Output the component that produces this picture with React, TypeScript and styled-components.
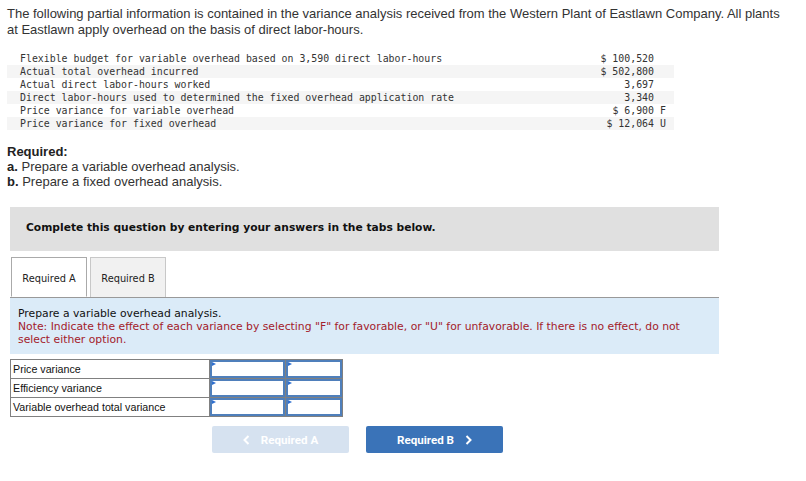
import React from 'react'
import styled, { createGlobalStyle } from 'styled-components'

const GlobalStyle = createGlobalStyle`
  body {
    margin: 0;
    background: #fff;
    font-family: "Liberation Sans", Arial, sans-serif;
  }
`

const Page = styled.div`
  width: 806px;
  padding-top: 6px;
`

const Intro = styled.p`
  margin: 0;
  padding: 0 14px 0 7px;
  font-size: 13px;
  line-height: 16px;
  color: #333;
`

const DataTable = styled.div`
  margin: 14px 0 0 7px;
  width: 667px;
  display: grid;
  grid-template-columns: 1fr auto 20px;
  font-family: "DejaVu Sans Mono", monospace;
  font-size: 9.9px;
  line-height: 13px;
  color: #333;
`

const DataCell = styled.div<{ $alt: boolean; $align?: string }>`
  background: ${({ $alt }) => ($alt ? '#f5f5f5' : '#fff')};
  text-align: ${({ $align }) => $align || 'left'};
  white-space: pre;
  height: 13px;
`

const LabelCell = styled(DataCell)`
  padding-left: 13px;
`

const Required = styled.div`
  margin: 14px 0 0 7px;
  font-size: 13px;
  line-height: 15px;
  color: #333;
  b {
    color: #222;
  }
`

const Lower = styled.div`
  margin: 18px 0 0 10px;
  width: 709px;
`

const Banner = styled.div`
  background: #e0e0e0;
  height: 44px;
  box-sizing: border-box;
  padding: 0 0 3px 16px;
  display: flex;
  align-items: center;
  font-family: "DejaVu Sans", Verdana, sans-serif;
  font-weight: bold;
  font-size: 10.7px;
  color: #111;
`

const TabRow = styled.div`
  display: flex;
  gap: 3px;
  margin-top: 6px;
  padding-left: 1px;
  position: relative;
  z-index: 1;
`

const Tab = styled.div<{ $active?: boolean }>`
  width: 76px;
  height: 40px;
  box-sizing: border-box;
  padding-top: 2px;
  display: flex;
  align-items: center;
  justify-content: center;
  border: 1px solid ${({ $active }) => ($active ? '#aaa' : '#c8c8c8')};
  border-bottom: ${({ $active }) => ($active ? '1px solid #fff' : 'none')};
  background: ${({ $active }) => ($active ? '#fff' : '#f1f1f1')};
  margin-bottom: ${({ $active }) => ($active ? '-1px' : '0')};
  font-family: "DejaVu Sans", Verdana, sans-serif;
  font-size: 9.8px;
  color: #222;
`

const Panel = styled.div`
  background: #dbebf8;
  border-top: 1px solid #999;
  padding: 9px 8px 8px 8px;
  font-family: "DejaVu Sans", Verdana, sans-serif;
  font-size: 10.8px;
  line-height: 13px;
  color: #111;
`

const Note = styled.div`
  color: #a3202a;
`

const AnswerTable = styled.table`
  margin-top: 5px;
  border-collapse: collapse;
  width: 333px;
  font-family: "Liberation Sans", Arial, sans-serif;
  font-size: 10.7px;
  color: #111;
`

const AnswerLabel = styled.td`
  border: 1px solid #808080;
  width: 196px;
  height: 18px;
  padding: 0 0 0 2px;
`

const InputCell = styled.td<{ $w: number }>`
  border: 1px solid #808080;
  width: ${({ $w }) => $w}px;
  height: 18px;
  padding: 0;
`

const InputBox = styled.div`
  position: relative;
  height: 18px;
  box-sizing: border-box;
  border: 2px solid #4f7fbb;
  &::before {
    content: '';
    position: absolute;
    left: 0;
    top: 0;
    border-left: 4px solid #2f6fcf;
    border-top: 2.5px solid transparent;
    border-bottom: 2.5px solid transparent;
  }
`

const ButtonRow = styled.div`
  display: flex;
  gap: 17px;
  margin: 9px 0 0 202px;
`

const NavButton = styled.div<{ $disabled?: boolean }>`
  width: 137px;
  height: 27px;
  border-radius: 2px;
  display: flex;
  align-items: center;
  justify-content: center;
  gap: 11px;
  background: ${({ $disabled }) => ($disabled ? '#d6e2f0' : '#3a73b8')};
  color: #fff;
  font-family: Roboto, "Liberation Sans", sans-serif;
  font-weight: bold;
  font-size: 11.6px;
`

const Chevron = ({ dir }: { dir: 'left' | 'right' }) => (
  <svg width="7" height="10" viewBox="0 0 7 10">
    <polyline
      points={dir === 'left' ? '5.5,1 1.5,5 5.5,9' : '1.5,1 5.5,5 1.5,9'}
      fill="none"
      stroke="#fff"
      strokeWidth="2"
    />
  </svg>
)

const rows = [
  ['Flexible budget for variable overhead based on 3,590 direct labor-hours', '$ 100,520', ''],
  ['Actual total overhead incurred', '$ 502,800', ''],
  ['Actual direct labor-hours worked', '3,697', ''],
  ['Direct labor-hours used to determined the fixed overhead application rate', '3,340', ''],
  ['Price variance for variable overhead', '$ 6,900', ' F'],
  ['Price variance for fixed overhead', '$ 12,064', ' U']
]

const answers = ['Price variance', 'Efficiency variance', 'Variable overhead total variance']

const App = () => {
  return (
    <Page>
      <GlobalStyle />
      <Intro>
        The following partial information is contained in the variance analysis received from the Western Plant of
        Eastlawn Company. All plants at Eastlawn apply overhead on the basis of direct labor-hours.
      </Intro>
      <DataTable>
        {rows.map((r, i) => (
          <React.Fragment key={i}>
            <LabelCell $alt={i % 2 === 1}>{r[0]}</LabelCell>
            <DataCell $alt={i % 2 === 1} $align="right">{r[1]}</DataCell>
            <DataCell $alt={i % 2 === 1}>{r[2]}</DataCell>
          </React.Fragment>
        ))}
      </DataTable>
      <Required>
        <b>Required:</b>
        <div><b>a.</b> Prepare a variable overhead analysis.</div>
        <div><b>b.</b> Prepare a fixed overhead analysis.</div>
      </Required>
      <Lower>
        <Banner>Complete this question by entering your answers in the tabs below.</Banner>
        <TabRow>
          <Tab $active>Required A</Tab>
          <Tab>Required B</Tab>
        </TabRow>
        <Panel>
          Prepare a variable overhead analysis.
          <Note>
            Note: Indicate the effect of each variance by selecting "F" for favorable, or "U" for unfavorable. If
            there is no effect, do not select either option.
          </Note>
        </Panel>
        <AnswerTable>
          <tbody>
            {answers.map(a => (
              <tr key={a}>
                <AnswerLabel>{a}</AnswerLabel>
                <InputCell $w={75}><InputBox /></InputCell>
                <InputCell $w={56}><InputBox /></InputCell>
              </tr>
            ))}
          </tbody>
        </AnswerTable>
        <ButtonRow>
          <NavButton $disabled><Chevron dir="left" />Required A</NavButton>
          <NavButton>Required B<Chevron dir="right" /></NavButton>
        </ButtonRow>
      </Lower>
    </Page>
  )
}

export default App
